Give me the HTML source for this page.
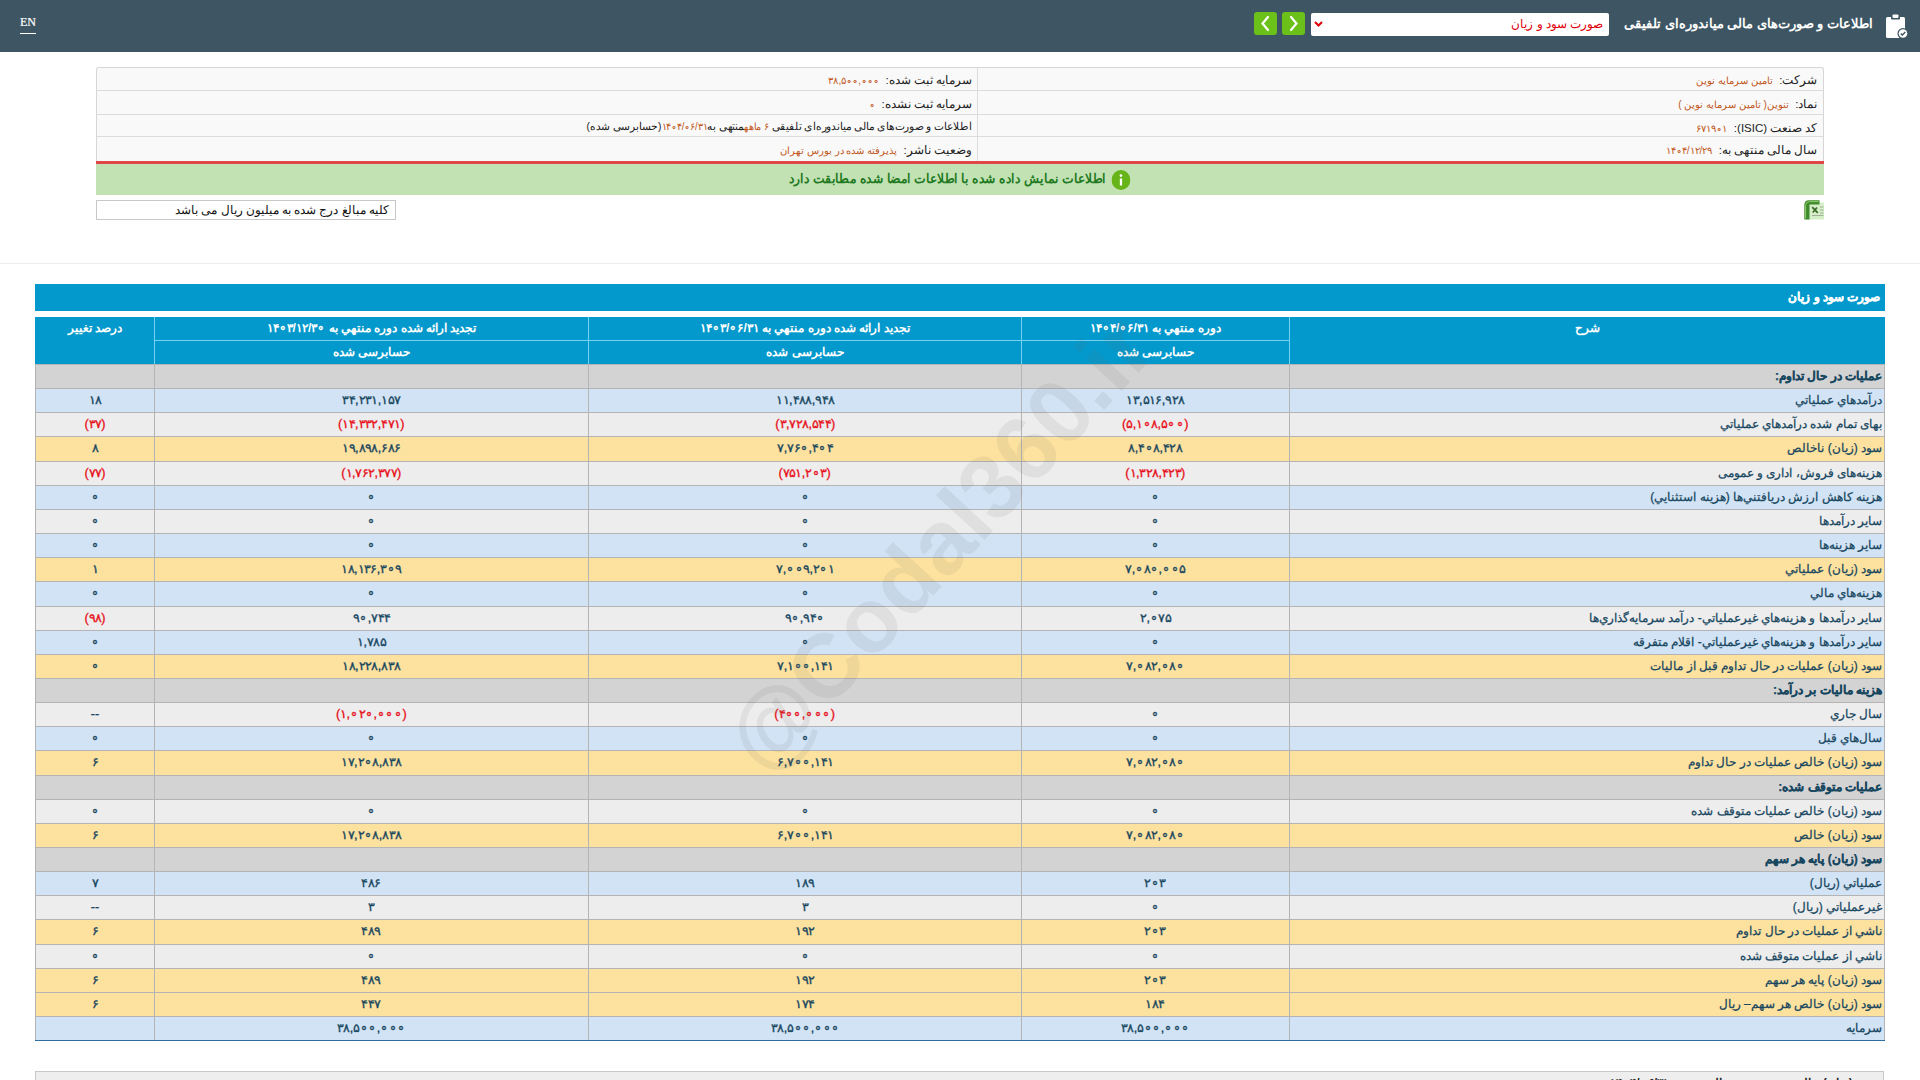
<!DOCTYPE html>
<html lang="fa" dir="rtl">
<head>
<meta charset="utf-8">
<title>صورت سود و زیان</title>
<style>
*{box-sizing:border-box;margin:0;padding:0}
html,body{width:1920px;height:1080px;overflow:hidden;background:#fff}
body{position:relative;font-family:"Liberation Sans",sans-serif;font-size:12px;color:#333}
.abs{position:absolute}
/* header */
#hdr{position:absolute;left:0;top:0;width:1920px;height:51.5px;background:#3e5663}
#en{position:absolute;left:20px;top:14px;font-family:"Liberation Serif",serif;font-size:12px;color:#fff;direction:ltr;border-bottom:1px solid #fff;line-height:17px;padding-bottom:2px;-webkit-text-stroke:0.2px #fff}
#ttl{position:absolute;right:47px;top:14px;font-size:13px;font-weight:bold;color:#fff;white-space:nowrap;line-height:20px}
#sel{position:absolute;left:1311px;top:13px;width:298px;height:23px;background:#fff;border-radius:2px}
#sel .t{position:absolute;right:6px;top:2px;color:#e0000a;font-size:11.5px;white-space:nowrap;line-height:19px}
.btn{position:absolute;top:12px;width:23px;height:23px;background:#6cc01a;border-radius:3px}
/* info */
#info{position:absolute;left:96px;top:67px;width:1727.5px;height:94px;background:#f9f9f9;border:1px solid #d6d6d6;border-bottom:none;border-radius:3px 3px 0 0}
.ir{position:absolute;left:0;width:100%;height:23.3px;border-top:1px solid #dcdcdc}
.ir .l,.ir .r{position:absolute;top:2px;height:100%;white-space:nowrap;font-size:11.5px;line-height:23px;color:#222}
.ir .r{right:5px}
.ir .l{right:850.5px}
.v{color:#c0561a;font-size:10px}
#vdiv{position:absolute;left:880px;top:0;width:1px;height:93px;background:#dcdcdc}
#red{position:absolute;left:96px;top:160.5px;width:1727.5px;height:3.5px;background:#e04848}
#grn{position:absolute;left:96px;top:164px;width:1727.5px;height:30.5px;background:#c2e2b4;text-align:center;color:#1f7a1f;font-weight:bold;font-size:12.5px;line-height:30px;white-space:nowrap}
#note{position:absolute;left:96px;top:200px;width:300px;height:20px;border:1px solid #c8c8c8;background:#fff;font-size:11.7px;line-height:18px;padding-right:6px;white-space:nowrap;color:#111}
#hline{position:absolute;left:0;top:263px;width:1920px;height:1px;background:#ececec}
/* table */
#tbar{position:absolute;left:35px;top:284px;width:1850px;height:27px;background:#0399cc;color:#fff;font-weight:bold;font-size:11.5px;line-height:27px;padding-right:5px;white-space:nowrap;-webkit-text-stroke:0.35px #fff}
#thead{position:absolute;left:35px;top:316.7px;width:1850px;height:47.3px;background:#0399cc;color:#fff;font-weight:bold;font-size:12px}
#thead .h{position:absolute;text-align:center;white-space:nowrap;line-height:23px}
#thead .vl{position:absolute;top:0;width:1px;height:47.3px;background:#74d3f3}
#thead .hl{position:absolute;top:23.5px;height:1px;background:#74d3f3}
.row{position:absolute;left:35px;width:1850px;height:24.15px;border-top:1px solid #b4b4b4}
.row .c{position:absolute;top:0;height:23.15px;line-height:23px;white-space:nowrap;color:#17465f;font-size:12px}
.row .num{text-align:center;font-weight:normal;-webkit-text-stroke:0.3px currentColor}
.row .lab{text-align:right;padding-right:3px;-webkit-text-stroke:0.25px currentColor}
.row .neg{color:#e8101a}
.row .num span{display:inline-block;transform:scaleX(1.06)}
.rs{background:#d3d3d3}
.rs .lab{font-weight:bold}
.rb{background:#d1e3f4}
.rg{background:#ededed}
.ry{background:#fde19e}
#vlines .vl{position:absolute;top:364px;width:1px;height:676px;background:#b4b4b4}
#tbot{position:absolute;left:35px;top:1039.5px;width:1850px;height:1.5px;background:#2e6e9e}
#bbox{position:absolute;left:35px;top:1071px;width:1849px;height:20px;background:#eeeeee;border:1px solid #c8c8c8}
#wmc{position:absolute;left:35px;top:316.7px;width:1850px;height:724px;overflow:hidden}
#wm{position:absolute;left:904px;top:226px;transform:translate(-50%,-50%) rotate(-47.4deg);font-size:91px;font-weight:bold;color:rgba(110,110,110,0.10);line-height:1;white-space:nowrap;direction:ltr;font-family:"Liberation Sans",sans-serif}
</style>
</head>
<body>
<div id="hdr">
  <div id="en">EN</div>
  <div class="btn" style="left:1254px"><svg width="23" height="23" viewBox="0 0 23 23"><path d="M14 5 L8.5 11.5 L14 18" stroke="#fff" stroke-width="2.2" fill="none" stroke-linecap="round"/></svg></div>
  <div class="btn" style="left:1282px"><svg width="23" height="23" viewBox="0 0 23 23"><path d="M9 5 L14.5 11.5 L9 18" stroke="#fff" stroke-width="2.2" fill="none" stroke-linecap="round"/></svg></div>
  <div id="sel"><svg style="position:absolute;left:3px;top:8px" width="9" height="6" viewBox="0 0 9 6"><path d="M1 1 L4.5 4.5 L8 1" stroke="#e0000a" stroke-width="2" fill="none"/></svg><div class="t">صورت سود و زیان</div></div>
  <div id="ttl">اطلاعات و صورت‌های مالی میاندوره‌ای تلفیقی</div>
  <svg style="position:absolute;left:1885px;top:14px" width="24" height="26" viewBox="0 0 24 26">
    <rect x="1" y="3" width="19" height="21" rx="1.5" fill="#fff"/>
    <rect x="6" y="1.5" width="9" height="4" rx="1" fill="#3e5663"/>
    <rect x="7.5" y="0.5" width="6" height="3.5" rx="1" fill="#fff"/>
    <circle cx="18" cy="19.5" r="5.5" fill="#3e5663"/>
    <circle cx="18" cy="19.5" r="4.3" fill="#fff"/>
    <path d="M15.8 19.6 L17.4 21 L20.3 18" stroke="#3e5663" stroke-width="1.4" fill="none"/>
  </svg>
</div>

<div id="info">
  <div class="ir" style="top:-1px;border-top:none"><div class="r">شرکت:&nbsp; <span class="v">تامین سرمایه نوین</span></div><div class="l">سرمایه ثبت شده:&nbsp; <span class="v"><bdi dir="ltr">۳۸,۵∘∘,∘∘∘</bdi></span></div></div>
  <div class="ir" style="top:22.3px"><div class="r">نماد:&nbsp; <span class="v">تنوین( تامین سرمایه نوین )</span></div><div class="l">سرمایه ثبت نشده:&nbsp; <span class="v"><bdi dir="ltr">∘</bdi></span></div></div>
  <div class="ir" style="top:45.6px"><div class="r">کد صنعت (ISIC):&nbsp; <span class="v"><bdi dir="ltr">۶۷۱۹∘۱</bdi></span></div><div class="l" style="top:0;font-size:10.5px;transform:scaleX(0.964);transform-origin:100% 50%">اطلاعات و صورت‌های مالی میاندوره‌ای تلفیقی <span class="v">۶ ماهه</span>منتهی به<span class="v"><bdi dir="ltr">۱۴∘۴/∘۶/۳۱</bdi></span>(حسابرسی شده)</div></div>
  <div class="ir" style="top:67.9px"><div class="r">سال مالی منتهی به:&nbsp; <span class="v"><bdi dir="ltr">۱۴∘۴/۱۲/۲۹</bdi></span></div><div class="l">وضعیت ناشر:&nbsp; <span class="v">پذیرفته شده در بورس تهران</span></div></div>
  <div id="vdiv"></div>
</div>
<div id="red"></div>
<div id="grn"><span style="display:inline-block;transform:scaleX(0.947)"><svg style="vertical-align:middle;margin-left:6px" width="20" height="20" viewBox="0 0 20 20"><circle cx="10" cy="10" r="10" fill="#67b418"/><rect x="8.8" y="8.5" width="2.4" height="7" fill="#fff"/><circle cx="10" cy="5.6" r="1.4" fill="#fff"/></svg>اطلاعات نمایش داده شده با اطلاعات امضا شده مطابقت دارد</span></div>
<div id="note">کلیه مبالغ درج شده به میلیون ریال می باشد</div>
<svg style="position:absolute;left:1804px;top:200px" width="20" height="20" viewBox="0 0 20 20">
  <rect x="3" y="2.5" width="17" height="17" fill="#d6efc8"/>
  <path d="M0.3 19.5 V5 Q0.3 0.3 5 0.3 H15.5 V4.5 H5.5 V19.5 Z" fill="#3f8a2c"/>
  <path d="M1.6 18.5 V5.5 Q1.6 1.6 5.5 1.6 H14.5" stroke="#8fcf6a" stroke-width="1" fill="none"/>
  <path d="M8.2 7.2 L13.8 12.8 M13 7.5 L8.8 12.5" stroke="#3b6a2a" stroke-width="1.8"/>
  <path d="M16 7h3.5M16 10h3.5M16 13h3.5M8 15.5h11.5" stroke="#9fae98" stroke-width="1.2"/>
</svg>
<div id="hline"></div>

<div id="tbar">صورت سود و زیان</div>
<div id="thead">
  <div class="h" style="left:1254.4px;width:595.6px;top:0">شرح</div>
  <div class="h" style="left:986.4px;width:268px;top:0">دوره منتهي به <bdi dir="ltr">۱۴∘۴/∘۶/۳۱</bdi></div>
  <div class="h" style="left:986.4px;width:268px;top:24px">حسابرسی شده</div>
  <div class="h" style="left:553.4px;width:433px;top:0">تجديد ارائه شده دوره منتهي به <bdi dir="ltr">۱۴∘۳/∘۶/۳۱</bdi></div>
  <div class="h" style="left:553.4px;width:433px;top:24px">حسابرسی شده</div>
  <div class="h" style="left:119.4px;width:434px;top:0">تجديد ارائه شده دوره منتهي به <bdi dir="ltr">۱۴∘۳/۱۲/۳∘</bdi></div>
  <div class="h" style="left:119.4px;width:434px;top:24px">حسابرسی شده</div>
  <div class="h" style="left:0;width:119.4px;top:0">درصد تغيير</div>
  <div class="vl" style="left:119.4px"></div>
  <div class="vl" style="left:553.4px"></div>
  <div class="vl" style="left:986.4px"></div>
  <div class="vl" style="left:1254.4px"></div>
  <div class="hl" style="left:119.4px;width:1135px"></div>
</div>
<div class="row rs" style="top:364px;height:24px">
<div class="c lab" style="left:1254.4px;width:595.6px">عمليات در حال تداوم:</div>
<div class="c num" dir="ltr" style="left:986.4px;width:268.0px"><span></span></div>
<div class="c num" dir="ltr" style="left:553.4px;width:433.0px"><span></span></div>
<div class="c num" dir="ltr" style="left:119.4px;width:434.0px"><span></span></div>
<div class="c num" dir="ltr" style="left:0.0px;width:119.4px"><span></span></div>
</div>
<div class="row rb" style="top:388px;height:24px">
<div class="c lab" style="left:1254.4px;width:595.6px">درآمدهاي عملياتي</div>
<div class="c num" dir="ltr" style="left:986.4px;width:268.0px"><span>۱۳,۵۱۶,۹۲۸</span></div>
<div class="c num" dir="ltr" style="left:553.4px;width:433.0px"><span>۱۱,۴۸۸,۹۴۸</span></div>
<div class="c num" dir="ltr" style="left:119.4px;width:434.0px"><span>۳۴,۲۳۱,۱۵۷</span></div>
<div class="c num" dir="ltr" style="left:0.0px;width:119.4px"><span>۱۸</span></div>
</div>
<div class="row rg" style="top:412px;height:24px">
<div class="c lab" style="left:1254.4px;width:595.6px">بهاى تمام شده درآمدهاي عملياتي</div>
<div class="c num neg" dir="ltr" style="left:986.4px;width:268.0px"><span>(۵,۱∘۸,۵∘∘)</span></div>
<div class="c num neg" dir="ltr" style="left:553.4px;width:433.0px"><span>(۳,۷۲۸,۵۴۴)</span></div>
<div class="c num neg" dir="ltr" style="left:119.4px;width:434.0px"><span>(۱۴,۳۳۲,۴۷۱)</span></div>
<div class="c num neg" dir="ltr" style="left:0.0px;width:119.4px"><span>(۳۷)</span></div>
</div>
<div class="row ry" style="top:436px;height:25px">
<div class="c lab" style="left:1254.4px;width:595.6px">سود (زيان) ناخالص</div>
<div class="c num" dir="ltr" style="left:986.4px;width:268.0px"><span>۸,۴∘۸,۴۲۸</span></div>
<div class="c num" dir="ltr" style="left:553.4px;width:433.0px"><span>۷,۷۶∘,۴∘۴</span></div>
<div class="c num" dir="ltr" style="left:119.4px;width:434.0px"><span>۱۹,۸۹۸,۶۸۶</span></div>
<div class="c num" dir="ltr" style="left:0.0px;width:119.4px"><span>۸</span></div>
</div>
<div class="row rg" style="top:461px;height:24px">
<div class="c lab" style="left:1254.4px;width:595.6px">هزینه‌های فروش، اداری و عمومی</div>
<div class="c num neg" dir="ltr" style="left:986.4px;width:268.0px"><span>(۱,۳۲۸,۴۲۳)</span></div>
<div class="c num neg" dir="ltr" style="left:553.4px;width:433.0px"><span>(۷۵۱,۲∘۳)</span></div>
<div class="c num neg" dir="ltr" style="left:119.4px;width:434.0px"><span>(۱,۷۶۲,۳۷۷)</span></div>
<div class="c num neg" dir="ltr" style="left:0.0px;width:119.4px"><span>(۷۷)</span></div>
</div>
<div class="row rb" style="top:485px;height:24px">
<div class="c lab" style="left:1254.4px;width:595.6px">هزينه كاهش ارزش دريافتني‌ها (هزينه استثنايي)</div>
<div class="c num" dir="ltr" style="left:986.4px;width:268.0px"><span>∘</span></div>
<div class="c num" dir="ltr" style="left:553.4px;width:433.0px"><span>∘</span></div>
<div class="c num" dir="ltr" style="left:119.4px;width:434.0px"><span>∘</span></div>
<div class="c num" dir="ltr" style="left:0.0px;width:119.4px"><span>∘</span></div>
</div>
<div class="row rg" style="top:509px;height:24px">
<div class="c lab" style="left:1254.4px;width:595.6px">ساير درآمدها</div>
<div class="c num" dir="ltr" style="left:986.4px;width:268.0px"><span>∘</span></div>
<div class="c num" dir="ltr" style="left:553.4px;width:433.0px"><span>∘</span></div>
<div class="c num" dir="ltr" style="left:119.4px;width:434.0px"><span>∘</span></div>
<div class="c num" dir="ltr" style="left:0.0px;width:119.4px"><span>∘</span></div>
</div>
<div class="row rb" style="top:533px;height:24px">
<div class="c lab" style="left:1254.4px;width:595.6px">ساير هزينه‌ها</div>
<div class="c num" dir="ltr" style="left:986.4px;width:268.0px"><span>∘</span></div>
<div class="c num" dir="ltr" style="left:553.4px;width:433.0px"><span>∘</span></div>
<div class="c num" dir="ltr" style="left:119.4px;width:434.0px"><span>∘</span></div>
<div class="c num" dir="ltr" style="left:0.0px;width:119.4px"><span>∘</span></div>
</div>
<div class="row ry" style="top:557px;height:24px">
<div class="c lab" style="left:1254.4px;width:595.6px">سود (زيان) عملياتي</div>
<div class="c num" dir="ltr" style="left:986.4px;width:268.0px"><span>۷,∘۸∘,∘∘۵</span></div>
<div class="c num" dir="ltr" style="left:553.4px;width:433.0px"><span>۷,∘∘۹,۲∘۱</span></div>
<div class="c num" dir="ltr" style="left:119.4px;width:434.0px"><span>۱۸,۱۳۶,۳∘۹</span></div>
<div class="c num" dir="ltr" style="left:0.0px;width:119.4px"><span>۱</span></div>
</div>
<div class="row rb" style="top:581px;height:25px">
<div class="c lab" style="left:1254.4px;width:595.6px">هزينه‌هاي مالي</div>
<div class="c num" dir="ltr" style="left:986.4px;width:268.0px"><span>∘</span></div>
<div class="c num" dir="ltr" style="left:553.4px;width:433.0px"><span>∘</span></div>
<div class="c num" dir="ltr" style="left:119.4px;width:434.0px"><span>∘</span></div>
<div class="c num" dir="ltr" style="left:0.0px;width:119.4px"><span>∘</span></div>
</div>
<div class="row rg" style="top:606px;height:24px">
<div class="c lab" style="left:1254.4px;width:595.6px">ساير درآمدها و هزينه‌هاي غيرعملياتي- درآمد سرمايه‌گذاري‌ها</div>
<div class="c num" dir="ltr" style="left:986.4px;width:268.0px"><span>۲,∘۷۵</span></div>
<div class="c num" dir="ltr" style="left:553.4px;width:433.0px"><span>۹∘,۹۴∘</span></div>
<div class="c num" dir="ltr" style="left:119.4px;width:434.0px"><span>۹∘,۷۴۴</span></div>
<div class="c num neg" dir="ltr" style="left:0.0px;width:119.4px"><span>(۹۸)</span></div>
</div>
<div class="row rb" style="top:630px;height:24px">
<div class="c lab" style="left:1254.4px;width:595.6px">ساير درآمدها و هزينه‌هاي غيرعملياتي- اقلام متفرقه</div>
<div class="c num" dir="ltr" style="left:986.4px;width:268.0px"><span>∘</span></div>
<div class="c num" dir="ltr" style="left:553.4px;width:433.0px"><span>∘</span></div>
<div class="c num" dir="ltr" style="left:119.4px;width:434.0px"><span>۱,۷۸۵</span></div>
<div class="c num" dir="ltr" style="left:0.0px;width:119.4px"><span>∘</span></div>
</div>
<div class="row ry" style="top:654px;height:24px">
<div class="c lab" style="left:1254.4px;width:595.6px">سود (زيان) عمليات در حال تداوم قبل از ماليات</div>
<div class="c num" dir="ltr" style="left:986.4px;width:268.0px"><span>۷,∘۸۲,∘۸∘</span></div>
<div class="c num" dir="ltr" style="left:553.4px;width:433.0px"><span>۷,۱∘∘,۱۴۱</span></div>
<div class="c num" dir="ltr" style="left:119.4px;width:434.0px"><span>۱۸,۲۲۸,۸۳۸</span></div>
<div class="c num" dir="ltr" style="left:0.0px;width:119.4px"><span>∘</span></div>
</div>
<div class="row rs" style="top:678px;height:24px">
<div class="c lab" style="left:1254.4px;width:595.6px">هزينه ماليات بر درآمد:</div>
<div class="c num" dir="ltr" style="left:986.4px;width:268.0px"><span></span></div>
<div class="c num" dir="ltr" style="left:553.4px;width:433.0px"><span></span></div>
<div class="c num" dir="ltr" style="left:119.4px;width:434.0px"><span></span></div>
<div class="c num" dir="ltr" style="left:0.0px;width:119.4px"><span></span></div>
</div>
<div class="row rg" style="top:702px;height:24px">
<div class="c lab" style="left:1254.4px;width:595.6px">سال جاري</div>
<div class="c num" dir="ltr" style="left:986.4px;width:268.0px"><span>∘</span></div>
<div class="c num neg" dir="ltr" style="left:553.4px;width:433.0px"><span>(۴∘∘,∘∘∘)</span></div>
<div class="c num neg" dir="ltr" style="left:119.4px;width:434.0px"><span>(۱,∘۲∘,∘∘∘)</span></div>
<div class="c num" dir="ltr" style="left:0.0px;width:119.4px"><span>--</span></div>
</div>
<div class="row rb" style="top:726px;height:24px">
<div class="c lab" style="left:1254.4px;width:595.6px">سال‌هاي قبل</div>
<div class="c num" dir="ltr" style="left:986.4px;width:268.0px"><span>∘</span></div>
<div class="c num" dir="ltr" style="left:553.4px;width:433.0px"><span>∘</span></div>
<div class="c num" dir="ltr" style="left:119.4px;width:434.0px"><span>∘</span></div>
<div class="c num" dir="ltr" style="left:0.0px;width:119.4px"><span>∘</span></div>
</div>
<div class="row ry" style="top:750px;height:25px">
<div class="c lab" style="left:1254.4px;width:595.6px">سود (زيان) خالص عمليات در حال تداوم</div>
<div class="c num" dir="ltr" style="left:986.4px;width:268.0px"><span>۷,∘۸۲,∘۸∘</span></div>
<div class="c num" dir="ltr" style="left:553.4px;width:433.0px"><span>۶,۷∘∘,۱۴۱</span></div>
<div class="c num" dir="ltr" style="left:119.4px;width:434.0px"><span>۱۷,۲∘۸,۸۳۸</span></div>
<div class="c num" dir="ltr" style="left:0.0px;width:119.4px"><span>۶</span></div>
</div>
<div class="row rs" style="top:775px;height:24px">
<div class="c lab" style="left:1254.4px;width:595.6px">عمليات متوقف شده:</div>
<div class="c num" dir="ltr" style="left:986.4px;width:268.0px"><span></span></div>
<div class="c num" dir="ltr" style="left:553.4px;width:433.0px"><span></span></div>
<div class="c num" dir="ltr" style="left:119.4px;width:434.0px"><span></span></div>
<div class="c num" dir="ltr" style="left:0.0px;width:119.4px"><span></span></div>
</div>
<div class="row rg" style="top:799px;height:24px">
<div class="c lab" style="left:1254.4px;width:595.6px">سود (زيان) خالص عمليات متوقف شده</div>
<div class="c num" dir="ltr" style="left:986.4px;width:268.0px"><span>∘</span></div>
<div class="c num" dir="ltr" style="left:553.4px;width:433.0px"><span>∘</span></div>
<div class="c num" dir="ltr" style="left:119.4px;width:434.0px"><span>∘</span></div>
<div class="c num" dir="ltr" style="left:0.0px;width:119.4px"><span>∘</span></div>
</div>
<div class="row ry" style="top:823px;height:24px">
<div class="c lab" style="left:1254.4px;width:595.6px">سود (زيان) خالص</div>
<div class="c num" dir="ltr" style="left:986.4px;width:268.0px"><span>۷,∘۸۲,∘۸∘</span></div>
<div class="c num" dir="ltr" style="left:553.4px;width:433.0px"><span>۶,۷∘∘,۱۴۱</span></div>
<div class="c num" dir="ltr" style="left:119.4px;width:434.0px"><span>۱۷,۲∘۸,۸۳۸</span></div>
<div class="c num" dir="ltr" style="left:0.0px;width:119.4px"><span>۶</span></div>
</div>
<div class="row rs" style="top:847px;height:24px">
<div class="c lab" style="left:1254.4px;width:595.6px">سود (زيان) پايه هر سهم</div>
<div class="c num" dir="ltr" style="left:986.4px;width:268.0px"><span></span></div>
<div class="c num" dir="ltr" style="left:553.4px;width:433.0px"><span></span></div>
<div class="c num" dir="ltr" style="left:119.4px;width:434.0px"><span></span></div>
<div class="c num" dir="ltr" style="left:0.0px;width:119.4px"><span></span></div>
</div>
<div class="row rb" style="top:871px;height:24px">
<div class="c lab" style="left:1254.4px;width:595.6px">عملياتي (ريال)</div>
<div class="c num" dir="ltr" style="left:986.4px;width:268.0px"><span>۲∘۳</span></div>
<div class="c num" dir="ltr" style="left:553.4px;width:433.0px"><span>۱۸۹</span></div>
<div class="c num" dir="ltr" style="left:119.4px;width:434.0px"><span>۴۸۶</span></div>
<div class="c num" dir="ltr" style="left:0.0px;width:119.4px"><span>۷</span></div>
</div>
<div class="row rg" style="top:895px;height:24px">
<div class="c lab" style="left:1254.4px;width:595.6px">غيرعملياتي (ريال)</div>
<div class="c num" dir="ltr" style="left:986.4px;width:268.0px"><span>∘</span></div>
<div class="c num" dir="ltr" style="left:553.4px;width:433.0px"><span>۳</span></div>
<div class="c num" dir="ltr" style="left:119.4px;width:434.0px"><span>۳</span></div>
<div class="c num" dir="ltr" style="left:0.0px;width:119.4px"><span>--</span></div>
</div>
<div class="row ry" style="top:919px;height:25px">
<div class="c lab" style="left:1254.4px;width:595.6px">ناشي از عمليات در حال تداوم</div>
<div class="c num" dir="ltr" style="left:986.4px;width:268.0px"><span>۲∘۳</span></div>
<div class="c num" dir="ltr" style="left:553.4px;width:433.0px"><span>۱۹۲</span></div>
<div class="c num" dir="ltr" style="left:119.4px;width:434.0px"><span>۴۸۹</span></div>
<div class="c num" dir="ltr" style="left:0.0px;width:119.4px"><span>۶</span></div>
</div>
<div class="row rg" style="top:944px;height:24px">
<div class="c lab" style="left:1254.4px;width:595.6px">ناشي از عمليات متوقف شده</div>
<div class="c num" dir="ltr" style="left:986.4px;width:268.0px"><span>∘</span></div>
<div class="c num" dir="ltr" style="left:553.4px;width:433.0px"><span>∘</span></div>
<div class="c num" dir="ltr" style="left:119.4px;width:434.0px"><span>∘</span></div>
<div class="c num" dir="ltr" style="left:0.0px;width:119.4px"><span>∘</span></div>
</div>
<div class="row ry" style="top:968px;height:24px">
<div class="c lab" style="left:1254.4px;width:595.6px">سود (زيان) پايه هر سهم</div>
<div class="c num" dir="ltr" style="left:986.4px;width:268.0px"><span>۲∘۳</span></div>
<div class="c num" dir="ltr" style="left:553.4px;width:433.0px"><span>۱۹۲</span></div>
<div class="c num" dir="ltr" style="left:119.4px;width:434.0px"><span>۴۸۹</span></div>
<div class="c num" dir="ltr" style="left:0.0px;width:119.4px"><span>۶</span></div>
</div>
<div class="row ry" style="top:992px;height:24px">
<div class="c lab" style="left:1254.4px;width:595.6px">سود (زيان) خالص هر سهم– ريال</div>
<div class="c num" dir="ltr" style="left:986.4px;width:268.0px"><span>۱۸۴</span></div>
<div class="c num" dir="ltr" style="left:553.4px;width:433.0px"><span>۱۷۴</span></div>
<div class="c num" dir="ltr" style="left:119.4px;width:434.0px"><span>۴۴۷</span></div>
<div class="c num" dir="ltr" style="left:0.0px;width:119.4px"><span>۶</span></div>
</div>
<div class="row rb" style="top:1016px;height:24px">
<div class="c lab" style="left:1254.4px;width:595.6px">سرمايه</div>
<div class="c num" dir="ltr" style="left:986.4px;width:268.0px"><span>۳۸,۵∘∘,∘∘∘</span></div>
<div class="c num" dir="ltr" style="left:553.4px;width:433.0px"><span>۳۸,۵∘∘,∘∘∘</span></div>
<div class="c num" dir="ltr" style="left:119.4px;width:434.0px"><span>۳۸,۵∘∘,∘∘∘</span></div>
<div class="c num" dir="ltr" style="left:0.0px;width:119.4px"><span></span></div>
</div>
<div id="vlines">
  <div class="vl" style="left:35px"></div>
  <div class="vl" style="left:154.4px"></div>
  <div class="vl" style="left:588.4px"></div>
  <div class="vl" style="left:1021.4px"></div>
  <div class="vl" style="left:1289.4px"></div>
  <div class="vl" style="left:1884px"></div>
</div>
<div id="tbot"></div>
<div id="bbox"><div style="position:absolute;right:6px;top:3px;font-weight:bold;font-size:12px;color:#222;white-space:nowrap;line-height:16px">سود (زیان) خالص هر سهم – ریال</div><div style="position:absolute;right:214px;top:3px;font-weight:bold;font-size:12px;color:#222;white-space:nowrap;line-height:16px"><bdi dir="ltr">۱۴∘۴/∘۶/۳۱</bdi></div></div>
<div id="wmc"><div id="wm">@Codal360.ir</div></div>
</body>
</html>
